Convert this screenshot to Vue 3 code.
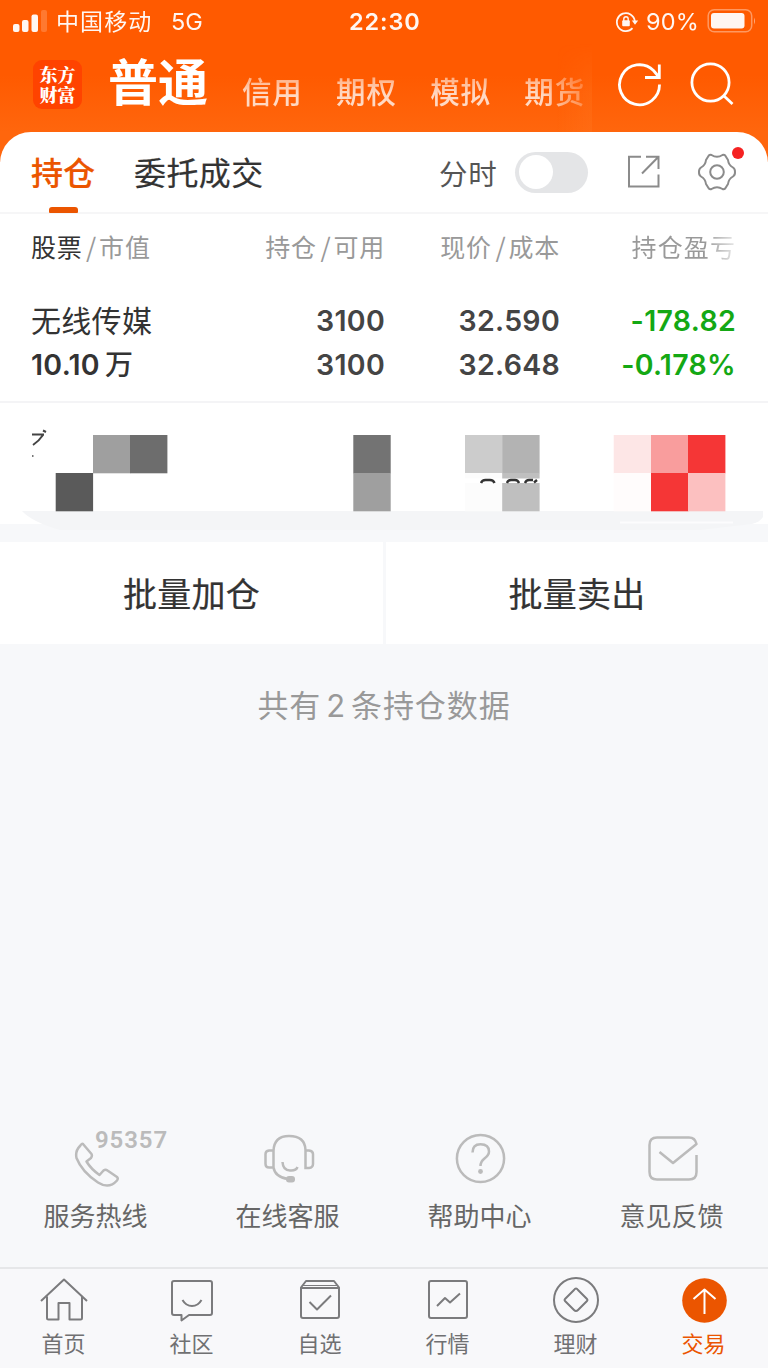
<script setup>
const markets = ['信用', '期权', '模拟', '期货']
const services = [
  { icon: 'phone', label: '服务热线' },
  { icon: 'headset', label: '在线客服' },
  { icon: 'help', label: '帮助中心' },
  { icon: 'mail', label: '意见反馈' },
]
const tabs = [
  { icon: 'home', label: '首页' },
  { icon: 'chat', label: '社区' },
  { icon: 'watch', label: '自选' },
  { icon: 'chart', label: '行情' },
  { icon: 'wealth', label: '理财' },
  { icon: 'trade', label: '交易', active: true },
]
const tiles = [
  [93, 435, '#9f9f9f'], [130, 435, '#6d6d6d'], [55.7, 473, '#5a5a5a'],
  [353.3, 435, '#737373'], [353.3, 473, '#9f9f9f'],
  [465, 435, '#cccccc'], [502.2, 435, '#b3b3b3'], [465, 473, '#fcfcfc'], [502.2, 473, '#bfbfbf'],
  [613.7, 435, '#fde6e6'], [651, 435, '#f99d9d'], [688, 435, '#f53636'],
  [613.7, 473, '#fffcfc'], [651, 473, '#f53636'], [688, 473, '#fcc0c0'],
]
</script>

<template>
  <div class="app">
    <header class="top">
      <div class="status">
        <svg class="signal" width="35" height="24" viewBox="0 0 35 24">
          <rect x="0" y="14" width="6.5" height="8" rx="2" fill="#fff" />
          <rect x="9" y="10" width="6.5" height="12" rx="2" fill="#fff" />
          <rect x="18.5" y="4.500" width="6.500" height="17.500" rx="2" fill="#fff" />
          <rect x="28" y="0" width="6" height="22" rx="2" fill="#fff" opacity=".2" />
        </svg>
        <span class="carrier">中国移动</span>
        <span class="net">5G</span>
        <span class="clock">22:30</span>
        <svg class="lock" width="24" height="24" viewBox="0 0 24 24" fill="none" stroke="#fff" stroke-width="1.8">
          <path d="M17.500 18.200A9 9 0 1 1 19.800 11" />
          <path d="M16.800 10.500h6.400l-3.200 4.200z" fill="#fff" stroke="none" />
          <rect x="7.200" y="10.300" width="7.600" height="6" rx="1" fill="#fff" stroke="none" />
          <path d="M8.800 11V9a2.200 2.200 0 0 1 4.400 0V11" stroke-width="1.400" />
        </svg>
        <span class="percent">90%</span>
        <svg class="battery" width="50" height="26" viewBox="0 0 50 26">
          <rect x="1.200" y="1.800" width="43.500" height="22" rx="6" fill="none" stroke="#fff" stroke-width="1.500" opacity=".4" />
          <rect x="4" y="5" width="33.500" height="15.500" rx="3" fill="#fff" />
          <path d="M47 9.500q2 3.500 0 7z" fill="#fff" opacity=".5" />
        </svg>
      </div>
      <nav class="nav">
        <div class="logo">东方<br>财富</div>
        <h1 class="current">普通</h1>
        <div class="markets">
          <div class="scroller">
            <span v-for="m in markets" :key="m">{{ m }}</span>
          </div>
        </div>
        <svg class="refresh" width="46" height="46" viewBox="0 0 46 46" fill="none" stroke="#fff" stroke-width="2.800">
          <path d="M42.500 22.500A20 20 0 1 1 36.500 8.500L41.500 14.500" />
          <path d="M42.300 2.500v13H28" />
        </svg>
        <svg class="search" width="46" height="46" viewBox="0 0 46 46" fill="none" stroke="#fff" stroke-width="2.800">
          <circle cx="20.500" cy="20.500" r="18.600" />
          <path d="M33.500 33.500l9 8.500" />
        </svg>
      </nav>
    </header>

    <main class="panel">
      <div class="panel-tabs">
        <span class="tab on">持仓</span>
        <span class="tab orders">委托成交</span>
        <span class="minute">分时</span>
        <span class="switch"><i></i></span>
        <svg class="share" width="36" height="36" viewBox="0 0 36 36" fill="none" stroke="#8b8b8b" stroke-width="2">
          <path d="M15 2.800H3v29.600h29.500V20.500" />
          <path d="M20 2.800h12.500V15M32 3.300L16 19.500" />
        </svg>
        <span class="gear">
          <svg width="40" height="40" viewBox="0 0 40 40" fill="none" stroke="#8b8b8b" stroke-width="2" stroke-linejoin="round">
            <path d="M11.800 3.500Q13 2.300 14.500 3Q20 6.500 25.500 3Q27 2.300 28.200 3.500L31 8Q31.500 13 36 15.500Q38.200 17 38 20Q38.200 23 36 24.500Q31.500 27 31 32L28.200 36.500Q27 37.700 25.500 37Q20 33.500 14.500 37Q13 37.700 11.800 36.500L9 32Q8.500 27 4 24.500Q1.800 23 2 20Q1.800 17 4 15.500Q8.500 13 9 8Z" />
            <circle cx="20" cy="20" r="6.800" />
          </svg>
          <b class="dot"></b>
        </span>
      </div>

      <div class="grid thead">
        <span><em>股票</em><u>/</u>市值</span>
        <span>持仓<u>/</u>可用</span>
        <span>现价<u>/</u>成本</span>
        <span class="fade">持仓盈亏</span>
      </div>

      <div class="holding">
        <div class="grid line">
          <span class="name">无线传媒</span><span>3100</span><span>32.590</span><span class="down">-178.82</span>
        </div>
        <div class="grid line">
          <span class="value">10.10<small>万</small></span><span>3100</span><span>32.648</span><span class="down">-0.178%</span>
        </div>
      </div>

      <svg class="masked" width="768" height="139" viewBox="0 403 768 139">
        <path d="M0 524H768V542H0Z" fill="#f7f8fa" />
        <path d="M22 511H763V517Q760 522 752 524L700 530H60Q32 522 22 511Z" fill="#f4f5f7" />
        <path d="M620 522.500H733" stroke="#fcfcfd" stroke-width="2" />
        <rect v-for="(t, i) in tiles" :key="i" :x="t[0]" :y="t[1]" width="37.400" height="38.300" :fill="t[2]" />
        <rect x="465" y="478.500" width="75" height="4.500" fill="#fff" />
        <path d="M481 483q1-3 4.500-3h4.500q3.500 0 4.500 3M507 483q1-3 4-3h4q3 0 4 3M525 483q1-3 4-3h4M534 482.500l3-2.500" fill="none" stroke="#333" stroke-width="2.400" />
        <path d="M32 434.500h12M43 430.500l3 1.500M43 435Q39 441 33 445" fill="none" stroke="#444" stroke-width="2" />
        <path d="M32 456h1.500" stroke="#777" stroke-width="2" />
      </svg>
    </main>

    <div class="batch">
      <button>批量加仓</button>
      <button>批量卖出</button>
    </div>

    <p class="summary">共有<span>2</span>条持仓数据</p>

    <section class="services">
      <div v-for="s in services" :key="s.icon" class="service">
        <svg v-if="s.icon === 'phone'" class="art" width="110" height="60" viewBox="41 1128 110 60" fill="none" stroke="#bbb" stroke-width="2.500" stroke-linejoin="round">
          <path d="M83 1144L91.500 1154Q92.500 1156 91 1158L86.500 1161.500Q91 1169 99.500 1175L103.500 1170.500Q105.500 1169 107.500 1170.500L117 1177Q118.500 1178.500 117 1180.500Q109 1189.500 98 1182.500Q82 1172 76.500 1158Q75 1151 80 1146Q82 1143 83 1144Z" />
        </svg>
        <svg v-else-if="s.icon === 'headset'" class="art" width="110" height="60" viewBox="233 1128 110 60" fill="none" stroke="#bbb" stroke-width="2.500">
          <path d="M273.500 1168V1151Q274 1136 289 1136Q305 1136 305.500 1150V1168H309Q313 1167.500 313 1164V1154Q313 1151 309 1150.500H305.500M273.500 1150.500H269Q265.500 1151 265.500 1154V1164Q265.500 1167.500 269 1167.500H273.500Q275 1177 288 1179M282.500 1162Q283 1170.500 290 1170.500Q296 1171 297.500 1167" />
          <rect x="286" y="1176" width="9" height="6.500" rx="3" fill="#bbb" stroke="none" />
        </svg>
        <svg v-else-if="s.icon === 'help'" class="art" width="110" height="60" viewBox="425 1128 110 60" fill="none" stroke="#bbb" stroke-width="2.500">
          <circle cx="480.500" cy="1158.500" r="23.600" />
          <path d="M472.500 1152.500Q472.500 1144.200 480.500 1144.200Q489 1144.200 489 1151.500Q489 1155 484.500 1158.500Q480.500 1161.500 480.500 1166" />
          <circle cx="480.500" cy="1171.500" r="2.400" fill="#bbb" stroke="none" />
        </svg>
        <svg v-else class="art" width="110" height="60" viewBox="617 1128 110 60" fill="none" stroke="#bbb" stroke-width="2.500" stroke-linejoin="round">
          <path d="M696.500 1155V1172Q696.500 1179.500 689 1179.500H657Q649.500 1179.500 649.500 1172V1145Q649.500 1137.500 657 1137.500H689Q695 1137.500 696.500 1144L673 1163L659.500 1152" />
        </svg>
        <b v-if="s.icon === 'phone'" class="hotline">95357</b>
        <span>{{ s.label }}</span>
      </div>
    </section>

    <footer class="tabbar">
      <div v-for="t in tabs" :key="t.icon" class="item" :class="{ active: t.active }">
        <svg width="50" height="50" viewBox="0 0 50 50" fill="none" stroke="#7b7b7d" stroke-width="2" stroke-linejoin="round">
          <path v-if="t.icon === 'home'" d="M2 26L25 4.500L48 26M8 21.500V43Q8 44.500 9.500 44.500H19.500V28H30.500V44.500H41.500Q43 44.500 43 43V21.500" />
          <path v-else-if="t.icon === 'chat'" d="M7 6H43Q45 6 45 8V38Q45 40 43 40H22L14.500 45.500V40H7Q5 40 5 38V8Q5 6 7 6ZM15.500 25Q19 31 25 31Q31 31 34.500 25" />
          <g v-else-if="t.icon === 'watch'">
            <path d="M6 12.500L11 6H39L44 12.500V41Q44 43 42 43H8Q6 43 6 41ZM6 13H44M14.500 27L22 34.500L36 20.500" />
            <path d="M7.500 10.500H42.500" stroke-width="1" />
          </g>
          <path v-else-if="t.icon === 'chart'" d="M8 6H42Q44 6 44 8V41Q44 43 42 43H8Q6 43 6 41V8Q6 6 8 6ZM14 31L22 23L27 27.500L37 18.500" />
          <g v-else-if="t.icon === 'wealth'">
            <circle cx="25" cy="25" r="22" />
            <path d="M25 13.500Q26 13.500 27 15L36 24Q37 25 36 26L27 35Q25 37 23 35L14 26Q13 25 14 24L23 15Q24 13.500 25 13.500Z" />
          </g>
          <g v-else>
            <circle cx="25.500" cy="25.500" r="22.300" fill="#eb5500" stroke="none" />
            <path d="M25.500 39V15M14.500 24L25.500 14.500L36.500 24" stroke="#fff" />
          </g>
        </svg>
        <span>{{ t.label }}</span>
      </div>
    </footer>
  </div>
</template>

<style>
body { margin: 0; background: #f7f8fa; }
</style>

<style scoped>
.app { width: 768px; height: 1368px; display: flex; flex-direction: column; overflow: hidden; background: #f7f8fa; font-family: Inter, "Noto Sans CJK SC", sans-serif; color: #333; white-space: nowrap; }
.app * { box-sizing: border-box; }
svg { flex: none; display: block; }
.top { height: 162px; flex: none; background: linear-gradient(#ff5a00 0, #ff5a00 75px, #ff660d 132px); color: #fff; }
.status { height: 44px; display: flex; align-items: center; padding-left: 13px; font-size: 23px; line-height: 44px; opacity: .95; }
.signal { margin-top: -1px; }
.carrier { margin-left: 8px; width: 115px; letter-spacing: 1.100px; }
.net { width: 178px; font-size: 23.5px; }
.clock { width: 266px; font-size: 23.5px; font-weight: 600; letter-spacing: .9px; }
.percent { margin-left: 7px; width: 61px; font-size: 23.5px; letter-spacing: .2px; }
.battery { margin-left: 0; margin-top: -3px; }
.nav { height: 88px; display: flex; align-items: flex-start; padding-left: 33px; }
.logo { width: 49px; height: 49px; margin-top: 16px; padding-top: 4px; border-radius: 9px; background: #ff4300; text-align: center; font: 900 18px/20px "Noto Serif CJK SC", "Noto Sans CJK SC", sans-serif; }
.current { margin: 0 0 0 26px; width: 134px; font-size: 50px; line-height: 79px; font-weight: 700; }
.markets { width: 350px; height: 88px; background: linear-gradient(90deg, transparent 315px, rgba(255, 125, 40, .25) 350px); -webkit-mask-image: linear-gradient(transparent, #000 50px); mask-image: linear-gradient(transparent, #000 50px); }
.scroller { display: flex; gap: 33.500px; color: #ffd9c4; font-size: 29.500px; font-weight: 500; letter-spacing: .8px; line-height: 97px; height: 88px; -webkit-mask-image: linear-gradient(90deg, #000 300px, transparent 365px); mask-image: linear-gradient(90deg, #000 300px, transparent 365px); }
.refresh { margin: 18px 0 0 25px; }
.search { margin: 18px 0 0 27px; }
.panel { height: 410px; margin-top: -30px; flex: none; border-radius: 31px 31px 0 0; background: #fff; }
.panel-tabs { height: 82px; display: flex; align-items: center; padding-left: 31px; border-bottom: 2px solid #f6f6f7; }
.tab { font-size: 32px; line-height: 82px; height: 80px; padding-top: 1px; }
.tab.on { position: relative; width: 103px; color: #eb5500; font-weight: 500; -webkit-text-stroke: .2px; }
.tab.on::after { content: ""; position: absolute; left: 18px; bottom: -1px; width: 29px; height: 6px; border-radius: 3px 3px 1px 1px; background: #eb5500; }
.orders { width: 305px; letter-spacing: .4px; -webkit-text-stroke: .2px; }
.minute { width: 76px; font-size: 28.500px; letter-spacing: .8px; color: #555; }
.switch { width: 73px; height: 41px; padding: 3.500px; border-radius: 21px; background: #e4e5e7; }
.switch i { display: block; width: 34px; height: 34px; border-radius: 50%; background: #fff; }
.share { margin-left: 38px; }
.gear { position: relative; margin-left: 35px; }
.dot { position: absolute; left: 35px; top: -5px; width: 12px; height: 12px; border-radius: 50%; background: #f52222; }
.grid { display: grid; grid-template-columns: 200px 154px 175px 176px; padding-left: 31px; }
.grid > span + span { text-align: right; }
.thead { height: 68px; font-size: 25px; line-height: 68px; letter-spacing: .8px; color: #999; }
.thead em { font-style: normal; color: #333; }
.thead u { text-decoration: none; margin: 0 2px 0 3.500px; font-family: "Noto Sans CJK SC", sans-serif; font-size: 26px; line-height: 1; }
.thead .fade { color: transparent; letter-spacing: 1.100px; background: linear-gradient(90deg, #999 145px, #eee 178px); -webkit-background-clip: text; background-clip: text; }
.holding { height: 121px; padding-top: 18px; border-bottom: 2px solid #f4f4f6; }
.line { height: 44px; line-height: 42px; font-size: 28.500px; font-weight: 600; color: #444; letter-spacing: .3px; }
.line .name { font-size: 30px; font-weight: 400; line-height: 43px; color: #333; }
.line .value { color: #333; }
.line small { margin-left: 5px; font-size: 28px; font-weight: 500; }
.line .down { color: #14a814; }
.batch { height: 102px; flex: none; display: grid; grid-template-columns: 383px 382px; gap: 3px; }
.batch button { border: 0; padding: 0; background: #fff; color: #333; font: 400 34px/102px "Noto Sans CJK SC", sans-serif; letter-spacing: .2px; -webkit-text-stroke: .2px; }
.summary { margin: 0; height: 124px; flex: none; line-height: 124px; text-align: center; font-size: 31px; letter-spacing: .9px; color: #999; }
.summary span { margin: 0 5px; }
.services { margin-top: auto; height: 139px; flex: none; display: grid; grid-template-columns: repeat(4, 192px); }
.service { position: relative; display: flex; flex-direction: column; align-items: center; font-size: 26px; color: #666; line-height: 58px; }
.service > span { margin-left: -1px; }
.hotline { position: absolute; left: 95px; top: 1px; font-family: Roboto, sans-serif; font-size: 24px; line-height: 22px; font-weight: 600; color: #bbb; letter-spacing: .9px; }
.tabbar { height: 101px; flex: none; display: grid; grid-template-columns: repeat(6, 128px); border-top: 2px solid #e6e7e9; background: #f8f8fa; }
.item { display: flex; flex-direction: column; align-items: center; padding-top: 6px; font-size: 22px; line-height: 38px; color: #707072; }
.item > span { margin-left: -1px; }
.item.active { color: #eb5500; }
</style>
